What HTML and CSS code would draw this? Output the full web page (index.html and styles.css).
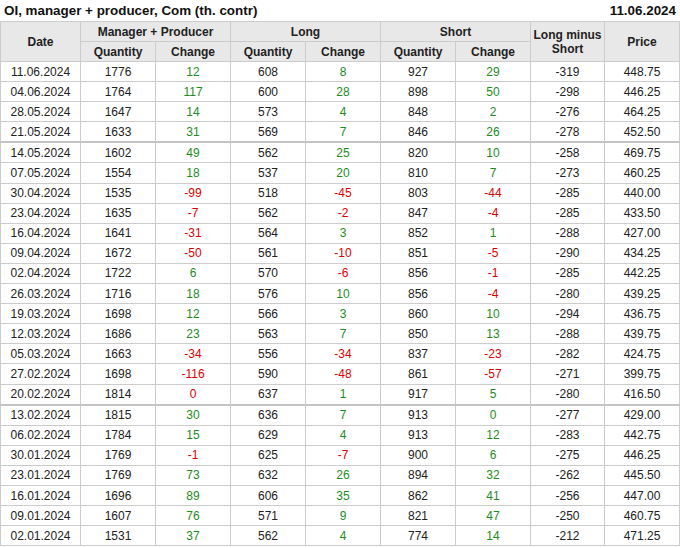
FILE: index.html
```html
<!DOCTYPE html>
<html>
<head>
<meta charset="utf-8">
<link rel="stylesheet" href="styles.css">
</head>
<body>
<div class="titlebar">
  <span class="title">OI, manager + producer, Com (th. contr)</span>
  <span class="date">11.06.2024</span>
</div>
<table class="grid">
  <colgroup>
    <col class="c-date"><col class="c-n"><col class="c-n"><col class="c-n"><col class="c-n"><col class="c-n"><col class="c-n"><col class="c-lm"><col class="c-n">
  </colgroup>
  <thead>
    <tr>
      <th rowspan="2">Date</th>
      <th colspan="2">Manager + Producer</th>
      <th colspan="2">Long</th>
      <th colspan="2">Short</th>
      <th rowspan="2">Long minus<br>Short</th>
      <th rowspan="2">Price</th>
    </tr>
    <tr>
      <th>Quantity</th><th>Change</th>
      <th>Quantity</th><th>Change</th>
      <th>Quantity</th><th>Change</th>
    </tr>
  </thead>
  <tbody>
    <tr><td>11.06.2024</td><td>1776</td><td class="up">12</td><td>608</td><td class="up">8</td><td>927</td><td class="up">29</td><td>-319</td><td>448.75</td></tr>
    <tr><td>04.06.2024</td><td>1764</td><td class="up">117</td><td>600</td><td class="up">28</td><td>898</td><td class="up">50</td><td>-298</td><td>446.25</td></tr>
    <tr><td>28.05.2024</td><td>1647</td><td class="up">14</td><td>573</td><td class="up">4</td><td>848</td><td class="up">2</td><td>-276</td><td>464.25</td></tr>
    <tr><td>21.05.2024</td><td>1633</td><td class="up">31</td><td>569</td><td class="up">7</td><td>846</td><td class="up">26</td><td>-278</td><td>452.50</td></tr>
    <tr class="sep"><td>14.05.2024</td><td>1602</td><td class="up">49</td><td>562</td><td class="up">25</td><td>820</td><td class="up">10</td><td>-258</td><td>469.75</td></tr>
    <tr><td>07.05.2024</td><td>1554</td><td class="up">18</td><td>537</td><td class="up">20</td><td>810</td><td class="up">7</td><td>-273</td><td>460.25</td></tr>
    <tr><td>30.04.2024</td><td>1535</td><td class="dn">-99</td><td>518</td><td class="dn">-45</td><td>803</td><td class="dn">-44</td><td>-285</td><td>440.00</td></tr>
    <tr><td>23.04.2024</td><td>1635</td><td class="dn">-7</td><td>562</td><td class="dn">-2</td><td>847</td><td class="dn">-4</td><td>-285</td><td>433.50</td></tr>
    <tr><td>16.04.2024</td><td>1641</td><td class="dn">-31</td><td>564</td><td class="up">3</td><td>852</td><td class="up">1</td><td>-288</td><td>427.00</td></tr>
    <tr><td>09.04.2024</td><td>1672</td><td class="dn">-50</td><td>561</td><td class="dn">-10</td><td>851</td><td class="dn">-5</td><td>-290</td><td>434.25</td></tr>
    <tr><td>02.04.2024</td><td>1722</td><td class="up">6</td><td>570</td><td class="dn">-6</td><td>856</td><td class="dn">-1</td><td>-285</td><td>442.25</td></tr>
    <tr><td>26.03.2024</td><td>1716</td><td class="up">18</td><td>576</td><td class="up">10</td><td>856</td><td class="dn">-4</td><td>-280</td><td>439.25</td></tr>
    <tr><td>19.03.2024</td><td>1698</td><td class="up">12</td><td>566</td><td class="up">3</td><td>860</td><td class="up">10</td><td>-294</td><td>436.75</td></tr>
    <tr><td>12.03.2024</td><td>1686</td><td class="up">23</td><td>563</td><td class="up">7</td><td>850</td><td class="up">13</td><td>-288</td><td>439.75</td></tr>
    <tr><td>05.03.2024</td><td>1663</td><td class="dn">-34</td><td>556</td><td class="dn">-34</td><td>837</td><td class="dn">-23</td><td>-282</td><td>424.75</td></tr>
    <tr><td>27.02.2024</td><td>1698</td><td class="dn">-116</td><td>590</td><td class="dn">-48</td><td>861</td><td class="dn">-57</td><td>-271</td><td>399.75</td></tr>
    <tr><td>20.02.2024</td><td>1814</td><td class="dn">0</td><td>637</td><td class="up">1</td><td>917</td><td class="up">5</td><td>-280</td><td>416.50</td></tr>
    <tr class="sep"><td>13.02.2024</td><td>1815</td><td class="up">30</td><td>636</td><td class="up">7</td><td>913</td><td class="up">0</td><td>-277</td><td>429.00</td></tr>
    <tr><td>06.02.2024</td><td>1784</td><td class="up">15</td><td>629</td><td class="up">4</td><td>913</td><td class="up">12</td><td>-283</td><td>442.75</td></tr>
    <tr><td>30.01.2024</td><td>1769</td><td class="dn">-1</td><td>625</td><td class="dn">-7</td><td>900</td><td class="up">6</td><td>-275</td><td>446.25</td></tr>
    <tr><td>23.01.2024</td><td>1769</td><td class="up">73</td><td>632</td><td class="up">26</td><td>894</td><td class="up">32</td><td>-262</td><td>445.50</td></tr>
    <tr><td>16.01.2024</td><td>1696</td><td class="up">89</td><td>606</td><td class="up">35</td><td>862</td><td class="up">41</td><td>-256</td><td>447.00</td></tr>
    <tr><td>09.01.2024</td><td>1607</td><td class="up">76</td><td>571</td><td class="up">9</td><td>821</td><td class="up">47</td><td>-250</td><td>460.75</td></tr>
    <tr><td>02.01.2024</td><td>1531</td><td class="up">37</td><td>562</td><td class="up">4</td><td>774</td><td class="up">14</td><td>-212</td><td>471.25</td></tr>
  </tbody>
</table>
</body>
</html>
```

FILE: styles.css
```css
html, body {
  margin: 0;
  padding: 0;
  background: #ffffff;
}
body {
  font-family: "Liberation Sans", Arial, sans-serif;
  color: #222222;
}
.titlebar {
  display: flex;
  justify-content: space-between;
  align-items: center;
  height: 21px;
  padding: 0 4px 0 4px;
  font-size: 13.4px;
  font-weight: bold;
  color: #111111;
}
.grid {
  border-collapse: collapse;
  table-layout: fixed;
  width: 679px;
  font-size: 12px;
}
.c-date { width: 80px; }
.c-n { width: 75px; }
.c-lm { width: 74px; }
.grid th, .grid td {
  border: 1px solid #cccccc;
  text-align: center;
  padding: 0;
  white-space: nowrap;
}
.grid th {
  background: #e8e8e8;
  font-weight: bold;
  color: #222222;
  height: 19px;
  line-height: 14px;
}
.grid td {
  height: 19.1px;
  line-height: 14px;
}
.grid tr.sep td {
  border-top: 2px solid #c4c4c4;
}
.grid td.up { color: #1e8c1e; }
.grid td.dn { color: #dd0000; }
```
